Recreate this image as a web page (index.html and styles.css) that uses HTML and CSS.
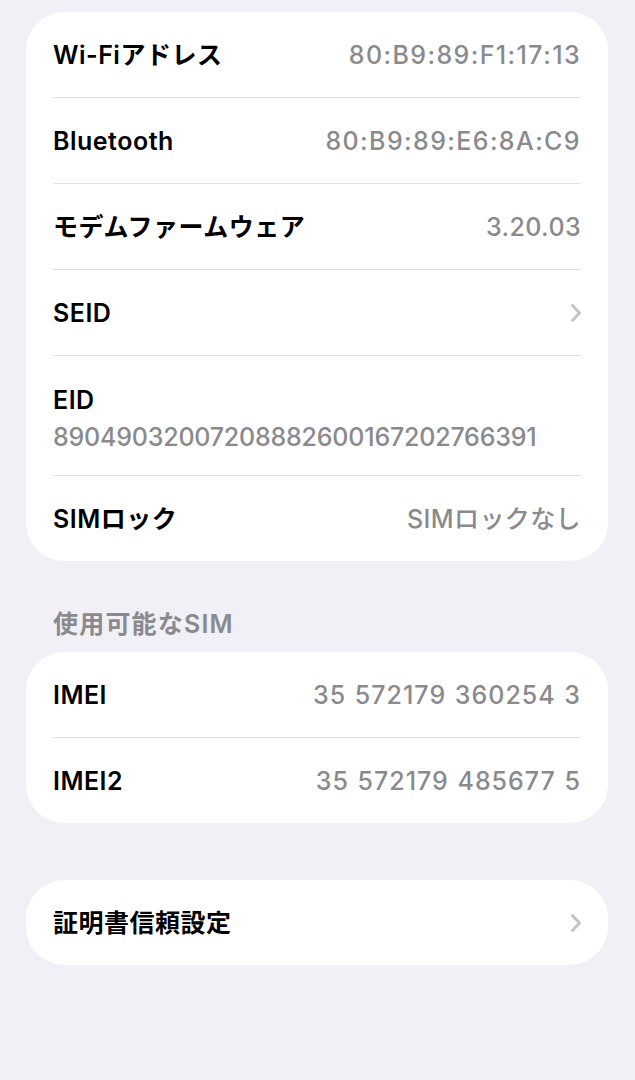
FILE: index.html
```html
<!DOCTYPE html>
<html lang="ja">
<head>
    <meta charset="UTF-8">
    <meta name="viewport" content="width=device-width, initial-scale=1.0">
    <title>情報</title>
    <link rel="stylesheet" href="styles.css">
</head>
<body>
    <div class="page">
        <div class="group">
            <div class="row">
                <span class="label">Wi-Fiアドレス</span>
                <span class="value mac">80:B9:89:F1:17:13</span>
            </div>
            <div class="row">
                <span class="label">Bluetooth</span>
                <span class="value mac">80:B9:89:E6:8A:C9</span>
            </div>
            <div class="row">
                <span class="label">モデムファームウェア</span>
                <span class="value">3.20.03</span>
            </div>
            <div class="row">
                <span class="label">SEID</span>
                <svg class="chevron" width="12" height="20" viewBox="0 0 12 20">
                    <path d="M2.5 2.5 L9.5 10 L2.5 17.5" fill="none" stroke="#c4c4c7" stroke-width="3" stroke-linecap="round" stroke-linejoin="round"/>
                </svg>
            </div>
            <div class="row row-stacked">
                <span class="label">EID</span>
                <span class="value eid">89049032007208882600167202766391</span>
            </div>
            <div class="row">
                <span class="label">SIMロック</span>
                <span class="value">SIMロックなし</span>
            </div>
        </div>

        <div class="section-title">使用可能なSIM</div>
        <div class="group">
            <div class="row">
                <span class="label">IMEI</span>
                <span class="value imei">35 572179 360254 3</span>
            </div>
            <div class="row">
                <span class="label">IMEI2</span>
                <span class="value imei">35 572179 485677 5</span>
            </div>
        </div>

        <div class="group group-single">
            <div class="row">
                <span class="label">証明書信頼設定</span>
                <svg class="chevron" width="12" height="20" viewBox="0 0 12 20">
                    <path d="M2.5 2.5 L9.5 10 L2.5 17.5" fill="none" stroke="#c4c4c7" stroke-width="3" stroke-linecap="round" stroke-linejoin="round"/>
                </svg>
            </div>
        </div>
    </div>
</body>
</html>
```

FILE: styles.css
```css
body {
    margin: 0;
    background-color: #f0f0f6;
    font-family: Inter, "Noto Sans CJK JP", sans-serif;
    -webkit-font-smoothing: antialiased;
}

.page {
    padding: 12px 27px 40px 26px;
}

.group {
    background-color: #fff;
    border-radius: 38px;
    padding: 0 27px;
}

.group-single {
    margin-top: 57px;
}

.row {
    display: flex;
    align-items: center;
    justify-content: space-between;
    height: 85px;
    border-bottom: 1px solid #e2e2e5;
}

.row:last-child {
    border-bottom: none;
}

.label {
    font-size: 25px;
    font-weight: 600;
    color: #000;
    line-height: 30px;
    letter-spacing: 0.5px;
}

.value {
    font-size: 25px;
    font-weight: 500;
    color: #8a8a8e;
    line-height: 30px;
    letter-spacing: 0.4px;
}

.value.mac {
    letter-spacing: 1.4px;
}

.value.imei {
    letter-spacing: 1px;
    word-spacing: 1px;
}

.value.eid {
    letter-spacing: -0.2px;
}

.row-stacked {
    flex-direction: column;
    align-items: flex-start;
    justify-content: flex-start;
    height: auto;
    padding: 29px 0 23px;
}

.row-stacked .value {
    margin-top: 7px;
}

.chevron {
    margin-right: -1px;
}

.section-title {
    font-size: 25px;
    font-weight: 600;
    color: #8a8a8e;
    line-height: 30px;
    letter-spacing: 1.2px;
    padding: 48px 27px 13px;
}
```
